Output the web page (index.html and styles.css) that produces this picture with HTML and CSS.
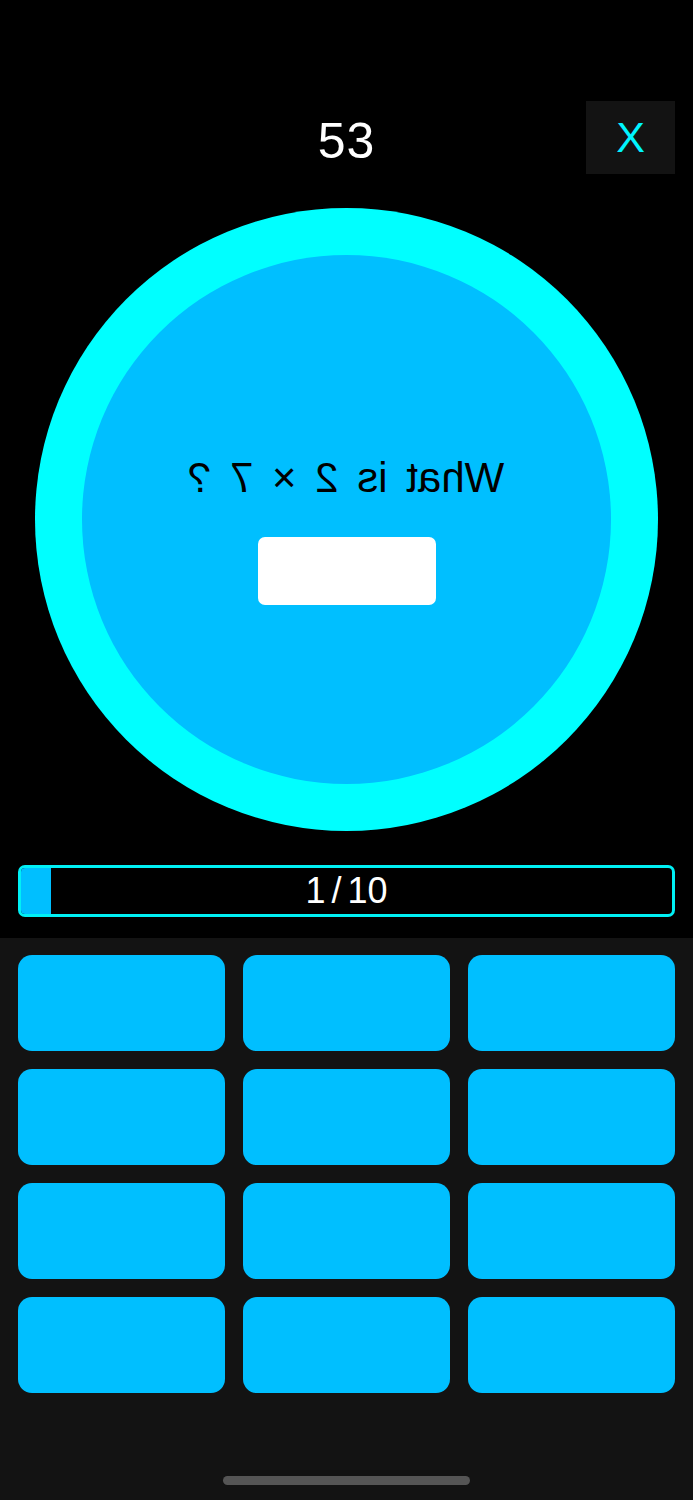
FILE: index.html
```html
<!DOCTYPE html>
<html lang="en">
<head>
<meta charset="utf-8">
<title>Quiz</title>
<link rel="stylesheet" href="styles.css">
</head>
<body>
<div class="screen">
  <section class="top">
    <header class="header">
      <div class="spacer"></div>
      <div class="timer">53</div>
      <button class="close">X</button>
    </header>
    <div class="ring">
      <div class="disc">
        <div class="question">What is 2 × 7 ?</div>
        <div class="answer"></div>
      </div>
    </div>
    <div class="progress">
      <div class="fill" style="width: 30px"></div>
      <div class="progress-label">1 / 10</div>
    </div>
  </section>
  <section class="pad">
    <div class="keys">
      <div class="key"></div><div class="key"></div><div class="key"></div>
      <div class="key"></div><div class="key"></div><div class="key"></div>
      <div class="key"></div><div class="key"></div><div class="key"></div>
      <div class="key"></div><div class="key"></div><div class="key"></div>
    </div>
    <div class="home-indicator"></div>
  </section>
</div>
</body>
</html>
```

FILE: styles.css
```css
* { box-sizing: border-box; }
html, body {
  margin: 0;
  padding: 0;
  background: #000;
  font-family: "Liberation Sans", Arial, sans-serif;
}
.screen {
  width: 693px;
  height: 1500px;
  display: flex;
  flex-direction: column;
}
.top {
  height: 938px;
  background: #000;
  display: flex;
  flex-direction: column;
  align-items: center;
}
.header {
  width: 100%;
  height: 174px;
  padding: 101px 18px 0;
  display: grid;
  grid-template-columns: 89px 1fr 89px;
  align-items: start;
}
.timer {
  text-align: center;
  color: #fff;
  font-size: 50px;
  line-height: 80px;
  letter-spacing: 1px;
}
.close {
  width: 89px;
  height: 73px;
  border: none;
  background: #131313;
  color: #00f5ff;
  font-family: "Liberation Sans", Arial, sans-serif;
  font-size: 43px;
  padding: 0;
  line-height: 73px;
}
.ring {
  margin-top: 34px;
  width: 623px;
  height: 623px;
  border-radius: 50%;
  background: #00ffff;
  display: flex;
  align-items: center;
  justify-content: center;
}
.disc {
  width: 529px;
  height: 529px;
  border-radius: 50%;
  background: #00bfff;
  display: flex;
  flex-direction: column;
  align-items: center;
  padding-top: 202px;
}
.question {
  color: #000;
  font-size: 42px;
  line-height: 42px;
  word-spacing: 7px;
  transform: scaleX(-1);
  white-space: nowrap;
}
.answer {
  margin-top: 38px;
  width: 178px;
  height: 68px;
  background: #fff;
  border-radius: 7px;
}
.progress {
  margin-top: 34px;
  width: 657px;
  height: 52px;
  border: 3px solid #00f0f5;
  border-radius: 7px;
  background: #000;
  position: relative;
  overflow: hidden;
  display: flex;
  align-items: center;
  justify-content: center;
}
.fill {
  position: absolute;
  left: 0;
  top: 0;
  bottom: 0;
  background: #00bfff;
}
.progress-label {
  position: relative;
  color: #fff;
  font-size: 36px;
  line-height: 46px;
  word-spacing: -4px;
}
.pad {
  flex: 1;
  background: #131313;
  padding: 17px 18px 0;
  display: flex;
  flex-direction: column;
  align-items: center;
}
.keys {
  width: 100%;
  display: grid;
  grid-template-columns: repeat(3, 1fr);
  grid-auto-rows: 96px;
  gap: 18px;
}
.key {
  background: #00bfff;
  border-radius: 14px;
}
.home-indicator {
  margin-top: 83px;
  width: 247px;
  height: 9px;
  border-radius: 5px;
  background: #555;
}
```
